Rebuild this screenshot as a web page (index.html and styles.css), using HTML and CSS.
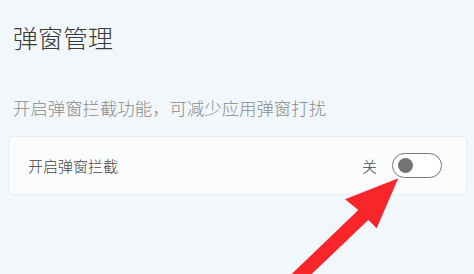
FILE: index.html
```html
<!DOCTYPE html>
<html lang="zh">
<head>
<meta charset="utf-8">
<link rel="stylesheet" href="styles.css">
</head>
<body>
<div class="page">
  <h1 class="title">弹窗管理</h1>
  <p class="desc">开启弹窗拦截功能，可减少应用弹窗打扰</p>
  <div class="card">
    <span class="label">开启弹窗拦截</span>
    <div class="ctrl">
      <span class="state">关</span>
      <span class="toggle"><span class="knob"></span></span>
    </div>
  </div>
  <svg class="arrow" width="474" height="274" viewBox="0 0 474 274">
    <polygon points="398.3,178.3 376.7,228.3 368.3,220 311.7,274 291.7,274 358.3,210 345,199.3" fill="#f8262a"/>
  </svg>
</div>
</body>
</html>
```
FILE: styles.css
```css
html, body {
  margin: 0;
  padding: 0;
  background: #f2f7fc;
  font-family: "Noto Sans CJK SC", "Noto Sans", sans-serif;
}
.page {
  position: relative;
  width: 474px;
  height: 274px;
  box-sizing: border-box;
  padding: 20px 7px 0 8px;
  overflow: hidden;
}
.title {
  margin: 0 0 0 5px;
  font-size: 25px;
  line-height: 34px;
  font-weight: 300;
  color: #3a3a3a;
}
.desc {
  margin: 42px 0 0 5px;
  font-size: 17.4px;
  line-height: 24px;
  font-weight: 300;
  color: #8a8a8a;
}
.card {
  margin-top: 16px;
  height: 59px;
  box-sizing: border-box;
  background: #fbfcfe;
  border: 1px solid #e8edf2;
  border-radius: 5px;
  display: flex;
  align-items: center;
  justify-content: space-between;
  padding: 0 24px 0 19px;
}
.label {
  font-size: 15px;
  font-weight: 300;
  color: #444;
}
.ctrl {
  display: flex;
  align-items: center;
  gap: 15px;
}
.state {
  font-size: 15px;
  font-weight: 300;
  color: #444;
}
.toggle {
  width: 50px;
  height: 25px;
  box-sizing: border-box;
  border: 1px solid #777;
  border-radius: 13px;
  background: #fff;
  display: flex;
  align-items: center;
  padding-left: 5px;
}
.knob {
  width: 15px;
  height: 15px;
  border-radius: 50%;
  background: #737373;
}
.arrow {
  position: absolute;
  left: 0;
  top: 0;
}
```
